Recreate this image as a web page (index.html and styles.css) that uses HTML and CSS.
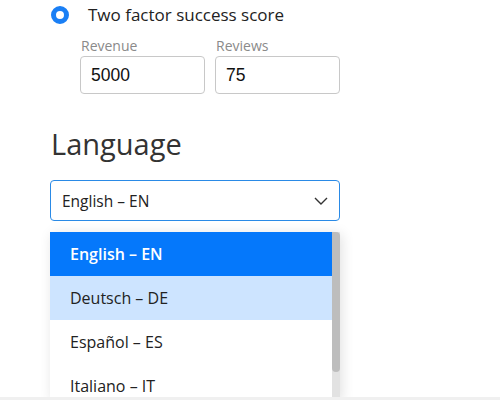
FILE: index.html
```html
<!DOCTYPE html>
<html>
<head>
<meta charset="utf-8">
<link rel="stylesheet" href="styles.css">
</head>
<body>
<div class="page">
  <div class="radio-row">
    <span class="radio"></span>
    <span class="radio-label">Two factor success score</span>
  </div>
  <div class="fields">
    <div class="field">
      <div class="field-label">Revenue</div>
      <div class="input">5000</div>
    </div>
    <div class="field">
      <div class="field-label">Reviews</div>
      <div class="input">75</div>
    </div>
  </div>
  <h2 class="heading">Language</h2>
  <div class="select-wrap">
    <div class="select">
      <span>English – EN</span>
      <svg class="chevron" width="14" height="8" viewBox="0 0 14 8"><path d="M1 1 L7 7 L13 1" fill="none" stroke="#333" stroke-width="1.4"/></svg>
    </div>
    <div class="dropdown">
      <ul class="options">
        <li class="option selected">English – EN</li>
        <li class="option hover">Deutsch – DE</li>
        <li class="option">Español – ES</li>
        <li class="option">Italiano – IT</li>
      </ul>
      <div class="scrollbar"><div class="thumb"></div></div>
    </div>
  </div>
</div>
<div class="footer-line"></div>
</body>
</html>
```
FILE: styles.css
```css
html, body {
  margin: 0;
  padding: 0;
  background: #fff;
  overflow: hidden;
  height: 400px;
}
body {
  font-family: "Open Sans", "Liberation Sans", sans-serif;
  color: #222;
}
.page {
  padding-left: 51px;
}
.radio-row {
  display: flex;
  align-items: center;
  height: 30px;
  gap: 19px;
}
.radio {
  width: 18px;
  height: 18px;
  box-sizing: border-box;
  border-radius: 50%;
  border: 5.5px solid #1a7ff5;
  background: #fff;
  margin-top: -1px;
}
.radio-label {
  font-size: 17px;
  color: #222;
  margin-top: -1px;
}
.fields {
  display: flex;
  gap: 10px;
  margin-left: 29px;
  margin-top: 5px;
}
.field-label {
  font-size: 14px;
  color: #8a8a8a;
  line-height: 21px;
  padding-left: 1px;
}
.input {
  width: 125px;
  height: 38px;
  box-sizing: border-box;
  border: 1px solid #c8c8c8;
  border-radius: 4px;
  font-family: "Liberation Sans", Arial, sans-serif;
  font-size: 17.5px;
  line-height: 36px;
  padding-left: 10px;
  color: #111;
}
.heading {
  margin: 33px 0 0 0;
  font-weight: 400;
  font-size: 29px;
  line-height: 34px;
  color: #333;
}
.select-wrap {
  position: relative;
  margin-top: 19px;
  width: 290px;
  margin-left: -1px;
}
.select {
  height: 41px;
  box-sizing: border-box;
  border: 1px solid #2a8ae6;
  border-radius: 4px;
  display: flex;
  align-items: center;
  justify-content: space-between;
  padding: 0 11px 0 11px;
  font-size: 15.5px;
  color: #222;
}
.dropdown {
  position: absolute;
  left: 0;
  top: 52px;
  width: 290px;
  height: 168px;
  overflow: hidden;
  background: #fff;
  box-shadow: 2px 2px 12px rgba(0,0,0,0.12);
}
.options {
  list-style: none;
  margin: 0;
  padding: 0;
  width: 282px;
}
.option {
  height: 44px;
  line-height: 44px;
  padding-left: 20px;
  font-size: 16px;
  color: #222;
}
.option.selected {
  background: #0578fb;
  color: #fff;
  font-weight: 600;
}
.option.hover {
  background: #cde4ff;
}
.scrollbar {
  position: absolute;
  right: 0;
  top: 0;
  width: 8px;
  height: 100%;
  background: #e2e2e2;
}
.thumb {
  height: 140px;
  background: #bdbdbd;
  border-radius: 0 4px 4px 4px;
}
.footer-line {
  position: absolute;
  left: 0;
  right: 0;
  top: 397px;
  height: 3px;
  background: #f0f0f0;
}
```
